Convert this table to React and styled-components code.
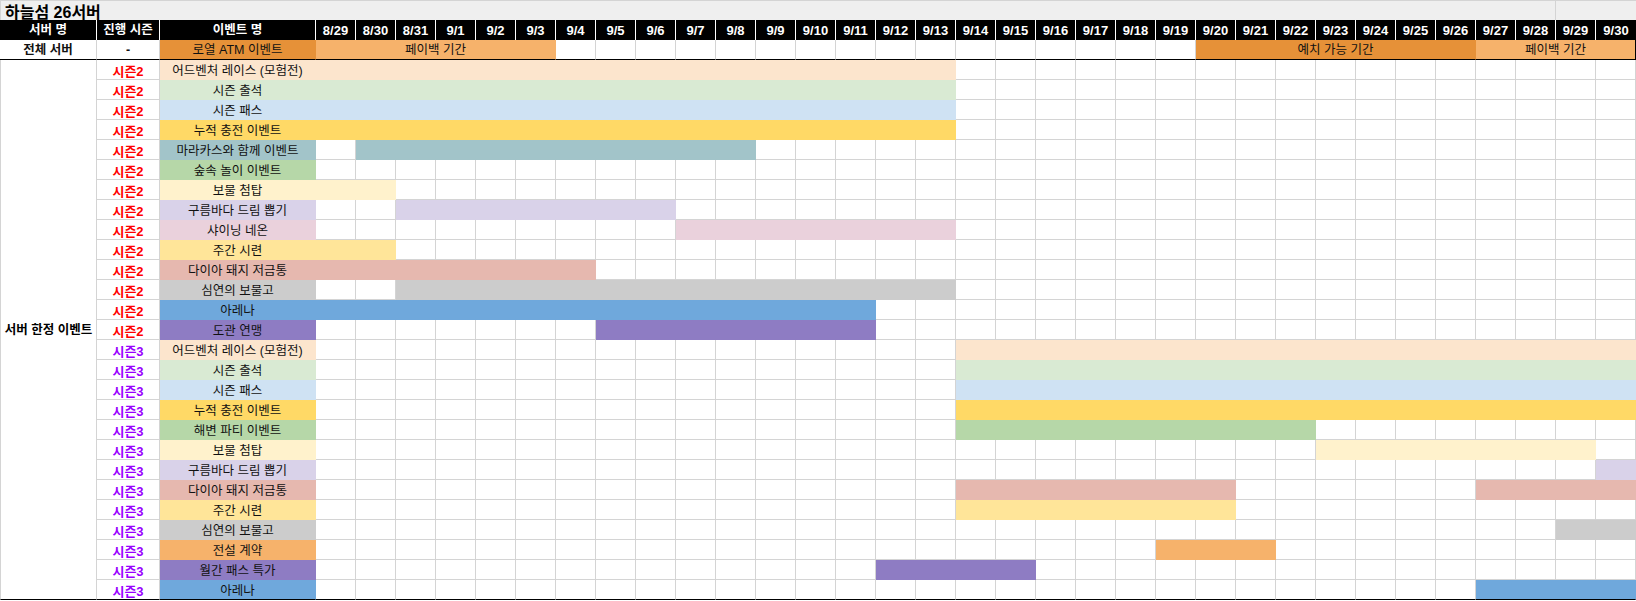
import React from "react";
import styled, { createGlobalStyle, css } from "styled-components";

const GlobalStyle = createGlobalStyle`
  html, body { margin: 0; padding: 0; background: #fff; }
  body { font-family: "Liberation Sans", "Noto Sans CJK KR", sans-serif; }
`;

const C = {
  peach: "#fce5cd",
  mint: "#d9ead3",
  sky: "#cfe2f3",
  yellow: "#ffd966",
  teal: "#a2c4c9",
  green: "#b6d7a8",
  cream: "#fff2cc",
  lavender: "#d9d2e9",
  pink: "#ead1dc",
  butter: "#ffe599",
  salmon: "#e6b8af",
  gray: "#cccccc",
  blue: "#6fa8dc",
  purple: "#8e7cc3",
  orange: "#f6b26b",
  deepOrange: "#e69138",
};

const GRID = "#d4d4d4";

const DATES = [
  "8/29",
  "8/30",
  "8/31",
  ...Array.from({ length: 30 }, (_, i) => `9/${i + 1}`),
];

const ROWS = [
  { s: 2, name: "어드벤처 레이스 (모험전)", color: C.peach, spans: [[0, 15]] },
  { s: 2, name: "시즌 출석", color: C.mint, spans: [[0, 15]] },
  { s: 2, name: "시즌 패스", color: C.sky, spans: [[0, 15]] },
  { s: 2, name: "누적 충전 이벤트", color: C.yellow, spans: [[0, 15]] },
  { s: 2, name: "마라카스와 함께 이벤트", color: C.teal, spans: [[1, 10]] },
  { s: 2, name: "숲속 놀이 이벤트", color: C.green, spans: [] },
  { s: 2, name: "보물 첨탑", color: C.cream, spans: [[0, 1]] },
  { s: 2, name: "구름바다 드림 뽑기", color: C.lavender, spans: [[2, 8]] },
  { s: 2, name: "샤이닝 네온", color: C.pink, spans: [[9, 15]] },
  { s: 2, name: "주간 시련", color: C.butter, spans: [[0, 1]] },
  { s: 2, name: "다이아 돼지 저금통", color: C.salmon, spans: [[0, 6]] },
  { s: 2, name: "심연의 보물고", color: C.gray, spans: [[2, 15]] },
  { s: 2, name: "아레나", color: C.blue, spans: [[0, 13]] },
  { s: 2, name: "도관 연맹", color: C.purple, spans: [[7, 13]] },
  { s: 3, name: "어드벤처 레이스 (모험전)", color: C.peach, spans: [[16, 32]] },
  { s: 3, name: "시즌 출석", color: C.mint, spans: [[16, 32]] },
  { s: 3, name: "시즌 패스", color: C.sky, spans: [[16, 32]] },
  { s: 3, name: "누적 충전 이벤트", color: C.yellow, spans: [[16, 32]] },
  { s: 3, name: "해변 파티 이벤트", color: C.green, spans: [[16, 24]] },
  { s: 3, name: "보물 첨탑", color: C.cream, spans: [[25, 31]] },
  { s: 3, name: "구름바다 드림 뽑기", color: C.lavender, spans: [[32, 32]] },
  { s: 3, name: "다이아 돼지 저금통", color: C.salmon, spans: [[16, 22], [29, 32]] },
  { s: 3, name: "주간 시련", color: C.butter, spans: [[16, 22]] },
  { s: 3, name: "심연의 보물고", color: C.gray, spans: [[31, 32]] },
  { s: 3, name: "전설 계약", color: C.orange, spans: [[21, 23]] },
  { s: 3, name: "월간 패스 특가", color: C.purple, spans: [[14, 17]] },
  { s: 3, name: "아레나", color: C.blue, spans: [[29, 32]] },
];

const SERVER_SPANS = [
  { from: 0, to: 5, color: C.orange, label: "페이백 기간" },
  { from: 22, to: 28, color: C.deepOrange, label: "예치 가능 기간" },
  { from: 29, to: 32, color: C.orange, label: "페이백 기간" },
];

const Sheet = styled.div`
  display: grid;
  grid-template-columns: 97px 63px 156px repeat(33, 40px);
  grid-auto-rows: 20px;
  width: 1636px;
  font-family: "Liberation Sans", "Noto Sans CJK KR", sans-serif;
  font-size: 12.5px;
  color: #111;
`;

const Cell = styled.div`
  box-sizing: border-box;
  display: flex;
  align-items: center;
  justify-content: center;
  white-space: nowrap;
  overflow: hidden;
  line-height: 1;
  padding-top: ${(p) => (p.$low ? "4px" : "1px")};
  background: #fff;
  border-right: 1px solid ${GRID};
  border-bottom: 1px solid ${(p) => (p.$last ? "#000" : GRID)};
  grid-column: span ${(p) => p.$span || 1};
`;

const TitleCell = styled.div`
  box-sizing: border-box;
  grid-column: 1 / 35;
  display: flex;
  align-items: center;
  padding: 1px 0 0 4px;
  background: #efefef;
  border-top: 1px solid ${GRID};
  border-left: 1px solid ${GRID};
  border-right: 1px solid ${GRID};
  font-size: 16px;
  font-weight: 700;
  color: #000;
`;

const TitleFiller = styled.div`
  box-sizing: border-box;
  grid-column: 35 / 37;
  background: #efefef;
  border-top: 1px solid ${GRID};
`;

const HeaderCell = styled.div`
  box-sizing: border-box;
  display: flex;
  align-items: center;
  justify-content: center;
  background: #000;
  color: #fff;
  font-weight: 700;
  font-size: ${(p) => (p.$date ? "13px" : "12.5px")};
  line-height: 1;
  padding-top: 1px;
  border-right: ${(p) => (p.$end ? "none" : "1px solid #fff")};
`;

const ServerCell = styled(Cell)`
  border-bottom-color: #000;
  font-weight: ${(p) => (p.$bold ? 700 : 400)};
  ${(p) =>
    p.$fill &&
    css`
      background: ${p.$fill};
      border-right-color: transparent;
    `}
  ${(p) =>
    p.$end &&
    css`
      border-right-color: #000;
    `}
`;

const GroupLabel = styled(Cell)`
  grid-row: span ${(p) => p.$rows};
  font-weight: 700;
  border-left: 1px solid ${GRID};
  border-bottom-color: #000;
  color: #000;
`;

const SeasonCell = styled(Cell)`
  font-weight: 700;
  font-size: 13px;
  color: ${(p) => (p.$season === 2 ? "#ff0000" : "#9900ff")};
`;

const EventCell = styled(Cell)`
  background: ${(p) => p.$fill};
  border-right-color: transparent;
  border-bottom-color: ${(p) => (p.$last ? "#000" : "transparent")};
`;

const BarCell = styled(Cell)`
  background: ${(p) => p.$fill};
  border-right-color: transparent;
  border-bottom-color: ${(p) => (p.$last ? "#000" : "transparent")};
`;

const EmptyCell = styled(Cell)``;

function DateCells({ spans, color, last }) {
  const out = [];
  let i = 0;
  while (i < DATES.length) {
    const sp = spans.find((s) => s[0] === i);
    if (sp) {
      const n = sp[1] - sp[0] + 1;
      out.push(<BarCell key={i} $span={n} $fill={color} $last={last} />);
      i += n;
    } else {
      out.push(<EmptyCell key={i} $last={last} />);
      i += 1;
    }
  }
  return out;
}

function ServerRow() {
  const out = [];
  let i = 0;
  while (i < DATES.length) {
    const sp = SERVER_SPANS.find((s) => s.from === i);
    if (sp) {
      const n = sp.to - sp.from + 1;
      out.push(
        <ServerCell key={i} $span={n} $fill={sp.color} $end={sp.to === DATES.length - 1}>
          {sp.label}
        </ServerCell>
      );
      i += n;
    } else {
      out.push(<ServerCell key={i} />);
      i += 1;
    }
  }
  return (
    <>
      <ServerCell $bold>전체 서버</ServerCell>
      <ServerCell $bold>-</ServerCell>
      <ServerCell $fill={C.deepOrange}>로열 ATM 이벤트</ServerCell>
      {out}
    </>
  );
}

export default function App() {
  return (
    <>
      <GlobalStyle />
      <Sheet>
        <TitleCell>하늘섬 26서버</TitleCell>
        <TitleFiller />

        <HeaderCell>서버 명</HeaderCell>
        <HeaderCell>진행 시즌</HeaderCell>
        <HeaderCell>이벤트 명</HeaderCell>
        {DATES.map((d, i) => (
          <HeaderCell key={d} $date $end={i === DATES.length - 1}>
            {d}
          </HeaderCell>
        ))}

        <ServerRow />

        <GroupLabel $rows={ROWS.length}>서버 한정 이벤트</GroupLabel>
        {ROWS.map((r, idx) => {
          const last = idx === ROWS.length - 1;
          return (
            <React.Fragment key={idx}>
              <SeasonCell $season={r.s} $last={last} $low>
                시즌{r.s}
              </SeasonCell>
              <EventCell $fill={r.color} $last={last} $low>
                {r.name}
              </EventCell>
              <DateCells spans={r.spans} color={r.color} last={last} />
            </React.Fragment>
          );
        })}
      </Sheet>
    </>
  );
}
